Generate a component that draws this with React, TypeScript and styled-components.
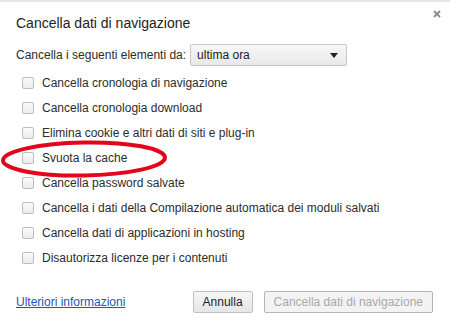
import React, {useState} from 'react';
import styled, {createGlobalStyle} from "styled-components";

const GlobalStyle = createGlobalStyle`
  html, body {
    margin: 0;
    padding: 0;
    background: #ffffff;
  }
  body {
    font-family: "Liberation Sans", Arial, sans-serif;
    color: #2c2c2c;
  }
`;

const Dialog = styled.div`
  position: relative;
  width: 450px;
  height: 325px;
  box-sizing: border-box;
  border-top: 2px solid #e6e6e6;
  padding: 0 17px 0 16px;
  display: flex;
  flex-direction: column;
`;

const Title = styled.h1`
  margin: 0;
  padding-top: 11px;
  font-size: 14px;
  font-weight: normal;
  color: #222;
  height: 23px;
  line-height: 20px;
`;

const CloseButton = styled.span`
  position: absolute;
  right: 7px;
  top: 4px;
  width: 12px;
  height: 12px;
`;

const PeriodRow = styled.div`
  display: flex;
  align-items: center;
  margin-top: 8px;
  height: 22px;
  font-size: 12px;
`;

const SelectBox = styled.div`
  margin-left: 4px;
  width: 157px;
  height: 22px;
  box-sizing: border-box;
  border: 1px solid #c8c8c8;
  border-radius: 2px;
  background: linear-gradient(#f8f8f8, #e8e8e8);
  display: flex;
  align-items: center;
  justify-content: space-between;
  padding: 0 8px 0 6px;
  font-size: 12px;
  color: #222;
`;

const Arrow = styled.span`
  width: 0;
  height: 0;
  border-left: 4px solid transparent;
  border-right: 4px solid transparent;
  border-top: 5px solid #222;
`;

const OptionList = styled.div`
  display: flex;
  flex-direction: column;
  margin-top: 4px;
  padding-left: 6px;
`;

const OptionRow = styled.label`
  display: flex;
  align-items: center;
  height: 25px;
  font-size: 12px;
`;

const CheckBox = styled.span`
  width: 12px;
  height: 12px;
  box-sizing: border-box;
  border: 1px solid #bdbdbd;
  border-radius: 2px;
  background: linear-gradient(#fafafa, #ececec);
  margin-right: 8px;
`;

const Footer = styled.div`
  display: flex;
  align-items: center;
  margin-top: auto;
  margin-bottom: 12px;
  height: 22px;
`;

const Link = styled.a`
  font-size: 12px;
  color: #2256b4;
  text-decoration: underline;
  margin-right: auto;
`;

const Button = styled.button<{disabled?: boolean}>`
  height: 22px;
  box-sizing: border-box;
  border: 1px solid ${p => p.disabled ? '#b4b4b4' : '#c0c0c0'};
  border-radius: 2px;
  background: ${p => p.disabled ? '#f3f3f3' : 'linear-gradient(#f6f6f6, #e6e6e6)'};
  color: ${p => p.disabled ? '#a9a9a9' : '#222'};
  font-family: "Liberation Sans", Arial, sans-serif;
  font-size: 12px;
  padding: 0 9px;
  margin-left: 11px;
`;

const Annotation = styled.svg`
  position: absolute;
  left: 0;
  top: 136px;
  pointer-events: none;
`;

const options = [
    "Cancella cronologia di navigazione",
    "Cancella cronologia download",
    "Elimina cookie e altri dati di siti e plug-in",
    "Svuota la cache",
    "Cancella password salvate",
    "Cancella i dati della Compilazione automatica dei moduli salvati",
    "Cancella dati di applicazioni in hosting",
    "Disautorizza licenze per i contenuti",
];

function App() {
    const [period] = useState("ultima ora");

    return (
        <>
            <GlobalStyle/>
            <Dialog>
                <Title>Cancella dati di navigazione</Title>
                <CloseButton>
                    <svg width="12" height="12" viewBox="0 0 12 12">
                        <path d="M3 3 L9 9 M9 3 L3 9" stroke="#8a8a8a" strokeWidth="1.8"/>
                    </svg>
                </CloseButton>
                <PeriodRow>
                    Cancella i seguenti elementi da:
                    <SelectBox>
                        <span>{period}</span>
                        <Arrow/>
                    </SelectBox>
                </PeriodRow>
                <OptionList>
                    {options.map(label => (
                        <OptionRow key={label}>
                            <CheckBox/>
                            {label}
                        </OptionRow>
                    ))}
                </OptionList>
                <Footer>
                    <Link href="#">Ulteriori informazioni</Link>
                    <Button>Annulla</Button>
                    <Button disabled>Cancella dati di navigazione</Button>
                </Footer>
                {/* red hand-drawn circle around "Svuota la cache" */}
                <Annotation width="172" height="42" viewBox="0 0 172 42">
                    <ellipse cx="84" cy="21" rx="81" ry="16.5" fill="none" stroke="#e3051b" strokeWidth="4"
                             transform="rotate(-1 84 21)"/>
                </Annotation>
            </Dialog>
        </>
    );
}

export default App;
